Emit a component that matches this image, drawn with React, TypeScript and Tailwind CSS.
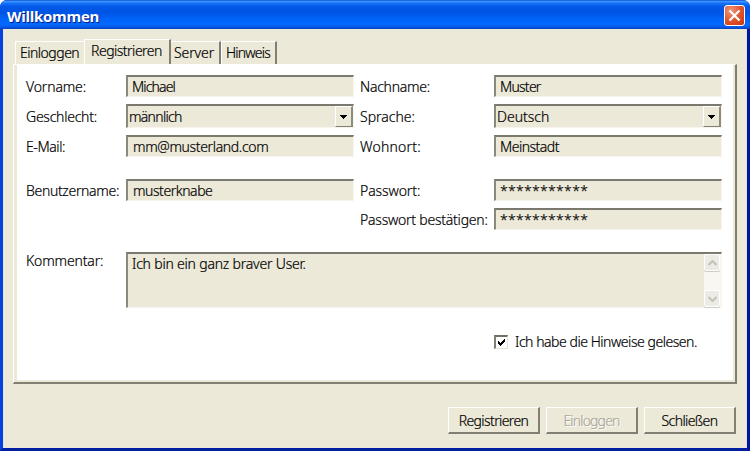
import React from "react";

const sunken =
  "box-border border-t-2 border-l-2 border-t-[#7b796d] border-l-[#8b897c] border-r border-b border-r-[#f6f4ec] border-b-[#f6f4ec] bg-[#ece9d8]";

function Label({ children, className = "" }: { children: React.ReactNode; className?: string }) {
  return <div className={`shrink-0 whitespace-nowrap ${className}`}>{children}</div>;
}

function Field({ children, className = "" }: { children: React.ReactNode; className?: string }) {
  return (
    <div className={`${sunken} flex h-[22px] w-[228px] shrink-0 items-center pl-1 whitespace-nowrap ${className}`}>
      {children}
    </div>
  );
}

function Select({ children, className = "" }: { children: React.ReactNode; className?: string }) {
  return (
    <div className={`${sunken} flex h-6 w-[228px] shrink-0 items-center justify-between pl-px ${className}`}>
      <span>{children}</span>
      <div className="flex h-[21px] w-[18px] items-center justify-center border-t border-r-2 border-b border-l border-t-white border-r-[#8d8b7e] border-b-[#817f73] border-l-white bg-[#ece9d8]">
        <svg width="7" height="4" viewBox="0 0 7 4" shapeRendering="crispEdges">
          <path d="M0 0H7V1H6V2H5V3H4V4H3V3H2V2H1V1H0Z" fill="#000" />
        </svg>
      </div>
    </div>
  );
}

function Button({ children, className = "" }: { children: React.ReactNode; className?: string }) {
  return (
    <button
      className={`flex h-[27px] w-[92px] items-center justify-center border-t border-r-2 border-b-2 border-l border-t-white border-r-[#817f73] border-b-[#817f73] border-l-white bg-[#ece9d8] pt-px whitespace-nowrap ${className}`}
    >
      {children}
    </button>
  );
}

function ScrollButton({ down = false }: { down?: boolean }) {
  return (
    <div className="flex h-[17px] w-4 items-center justify-center rounded-[2px] border border-white bg-[#ecebe5] shadow-[0_1px_0_#cfcdc2]">
      <svg width="9" height="6" viewBox="0 0 9 6" fill="none" stroke="#c4c2b8" strokeWidth="2">
        <path d={down ? "M0.5 1L4.5 5L8.5 1" : "M0.5 5L4.5 1L8.5 5"} />
      </svg>
    </div>
  );
}

export default function App() {
  return (
    <div className="h-[451px] w-[750px] overflow-hidden bg-white font-['Noto_Sans','Open_Sans',sans-serif] text-[14px] leading-[18px] font-light text-black">
      <div className="flex h-full flex-col overflow-hidden rounded-t-[7px] bg-[#0831d9]">
        <header className="flex h-[29px] shrink-0 items-center justify-between bg-[linear-gradient(180deg,#0a4fd0_0%,#3e94ff_5%,#1673f8_11%,#0459e8_22%,#0054e3_42%,#0062f7_65%,#0369ff_84%,#0759e8_93%,#0641bd_100%)] pr-[5px] pl-[7px]">
          <h1 className="pt-[3px] font-['Open_Sans','Noto_Sans',sans-serif] text-[15px] font-bold tracking-[-0.3px] text-white [text-shadow:1px_1px_0_#0a1883]">
            Willkommen
          </h1>
          <div className="mt-[2px] flex h-[21px] w-[21px] items-center justify-center rounded-[3px] border border-white bg-[radial-gradient(circle_at_30%_25%,#ef977e_0%,#e3552f_50%,#c4330b_100%)]">
            <svg width="13" height="13" viewBox="0 0 13 13" stroke="#fff" strokeWidth="2.2">
              <path d="M1.5 1.5L11.5 11.5M11.5 1.5L1.5 11.5" />
            </svg>
          </div>
        </header>

        <div className="flex min-h-0 flex-1 border-r-[3px] border-b-[3px] border-l-[3px] border-r-[#00159a] border-b-[#001ea0] border-l-[#0a3fd8] [-webkit-text-stroke:0.2px]">
          <div className="flex flex-1 flex-col border-r border-l border-r-[#d4e5ee] border-l-[#d8e8f0] bg-[#ece9d8]">
            <nav className="mt-[10px] ml-[9px] flex h-[25px] w-[726px] items-end">
              <div className="ml-[2px] flex h-[23px] w-[69px] border-t border-l border-white pt-[2px] pl-[4px]">
                <span className="tracking-[-0.5px]">Einloggen</span>
              </div>
              <div className="z-10 flex h-[25px] w-[87px] border-t border-r-2 border-l border-t-white border-r-[#817f73] border-l-white bg-[#ece9d8] pt-[2px] pl-[6px]">
                <span className="tracking-[-0.5px]">Registrieren</span>
              </div>
              <div className="flex h-[23px] w-[50px] border-t border-r-2 border-t-white border-r-[#817f73] pt-[2px] pl-[3px]">
                <span className="tracking-[-0.1px]">Server</span>
              </div>
              <div className="flex h-[23px] w-[56px] border-t border-r-2 border-l border-t-white border-r-[#817f73] border-l-white pt-[2px] pl-[4px]">
                <span className="tracking-[-0.8px]">Hinweis</span>
              </div>
            </nav>

            <main className="ml-[9px] h-[320px] w-[724px] shrink-0 border-t border-r-2 border-b-2 border-l border-t-white border-r-[#817f73] border-b-[#817f73] border-l-white">
              <div className="h-full border-r-2 border-b-2 border-l-[3px] border-[#ece9d8] bg-white pt-[10px] pl-[9px]">
                <div className="flex h-[22px] items-center">
                  <Label className="w-[100px] pt-px tracking-[-0.15px]">Vorname:</Label>
                  <Field className="tracking-[-0.85px]">Michael</Field>
                  <Label className="ml-[6px] w-[134px] pt-px tracking-[-0.25px]">Nachname:</Label>
                  <Field className="tracking-[-0.75px]">Muster</Field>
                </div>
                <div className="mt-[7px] flex h-6 items-center">
                  <Label className="w-[100px] pt-px tracking-[-0.25px]">Geschlecht:</Label>
                  <Select className="tracking-[-0.7px]">männlich</Select>
                  <Label className="ml-[6px] w-[134px] pt-px tracking-[0px]">Sprache:</Label>
                  <Select className="tracking-[0px]">Deutsch</Select>
                </div>
                <div className="mt-[7px] flex h-[22px] items-center">
                  <Label className="w-[100px] pt-px tracking-[-0.4px]">E-Mail:</Label>
                  <Field className="pl-[5px] tracking-[-0.35px]">mm@musterland.com</Field>
                  <Label className="ml-[6px] w-[134px] pt-px tracking-[0.2px]">Wohnort:</Label>
                  <Field className="tracking-[-0.5px]">Meinstadt</Field>
                </div>
                <div className="mt-[22px] flex h-[22px] items-center">
                  <Label className="w-[100px] pt-px tracking-[-0.33px]">Benutzername:</Label>
                  <Field className="pl-[5px] tracking-[-0.45px]">musterknabe</Field>
                  <Label className="ml-[6px] w-[134px] pt-px tracking-[-0.1px]">Passwort:</Label>
                  <Field className="tracking-[0.3px]">***********</Field>
                </div>
                <div className="mt-[7px] flex h-[22px] items-center">
                  <Label className="ml-[334px] w-[134px] pt-px tracking-[-0.23px]">Passwort bestätigen:</Label>
                  <Field className="tracking-[0.3px]">***********</Field>
                </div>
                <div className="mt-[22px] flex">
                  <Label className="w-[100px] tracking-[-0.15px]">Kommentar:</Label>
                  <div className={`${sunken} flex h-[56px] w-[596px] justify-between pl-1`}>
                    <span className="pt-[1px] tracking-[-0.2px]">Ich bin ein ganz braver User.</span>
                    <div className="flex w-[17px] flex-col justify-between bg-[#f8f7f2]">
                      <ScrollButton />
                      <ScrollButton down />
                    </div>
                  </div>
                </div>
                <div className="mt-[25px] ml-[468px] flex h-[18px] items-center">
                  <div className="flex h-[14px] w-[14px] items-center justify-center border-t-2 border-r border-b border-l-2 border-t-[#716f64] border-r-[#e5e2d3] border-b-[#e5e2d3] border-l-[#817f73] bg-white">
                    <svg width="7" height="7" viewBox="0 0 7 7" shapeRendering="crispEdges">
                      <path d="M0 2H1V3H2V4H3V3H4V2H5V1H6V0H7V3H6V4H5V5H4V6H3V7H2V6H1V5H0Z" fill="#000" />
                    </svg>
                  </div>
                  <span className="ml-[7px] tracking-[-0.46px] whitespace-nowrap">Ich habe die Hinweise gelesen.</span>
                </div>
              </div>
            </main>

            <footer className="mt-[23px] mr-[10px] flex justify-end gap-[6px]">
              <Button className="tracking-[-0.6px]">Registrieren</Button>
              <Button className="tracking-[-0.85px] text-[#aca899] [text-shadow:1px_1px_0_#fff]">Einloggen</Button>
              <Button className="tracking-[-0.6px]">Schließen</Button>
            </footer>
          </div>
        </div>
      </div>
    </div>
  );
}
